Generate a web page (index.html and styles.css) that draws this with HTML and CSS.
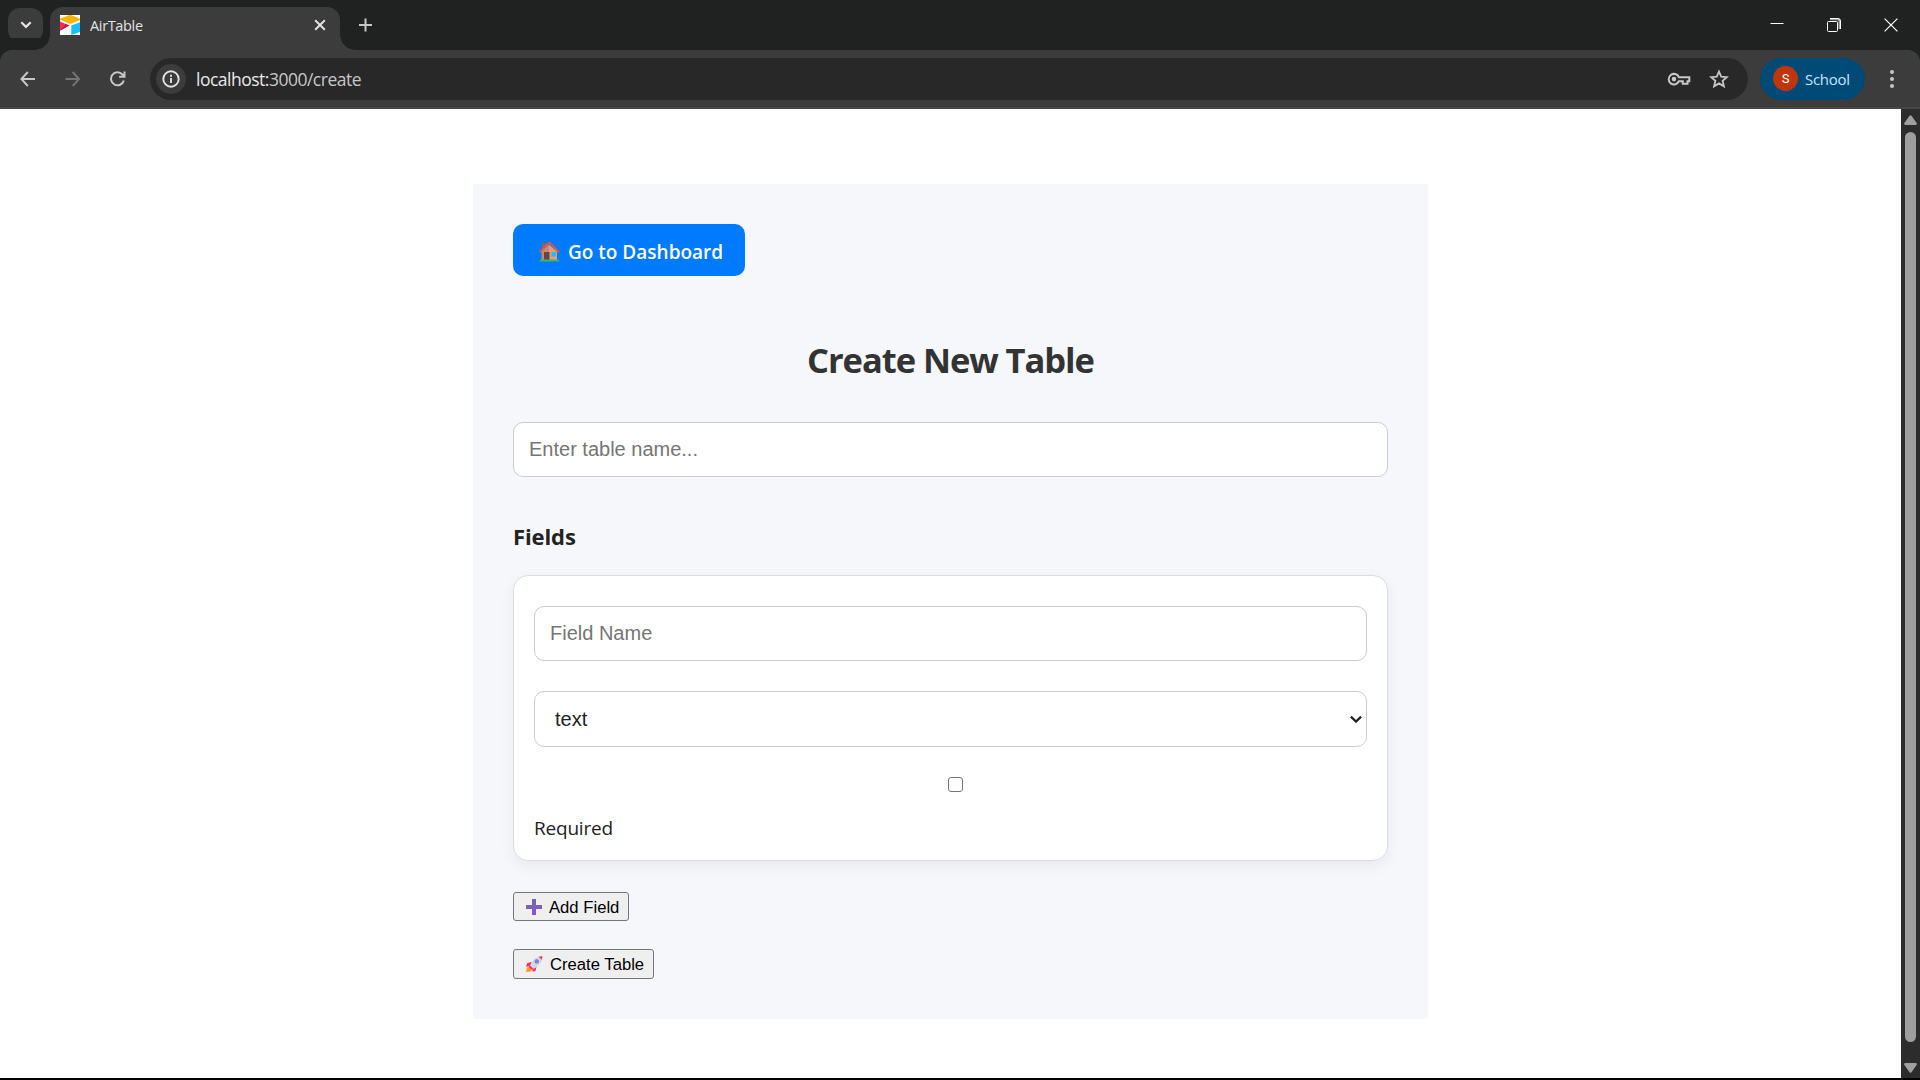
FILE: index.html
```html
<!DOCTYPE html>
<html lang="en">
<head>
<meta charset="utf-8">
<title>AirTable</title>
<link rel="stylesheet" href="styles.css">
</head>
<body>
<div class="window">
  <header class="tabstrip">
    <button class="tab-search" aria-label="Search tabs"><svg width="12" height="8" viewBox="0 0 12 8" fill="none" stroke="#e3e3e3" stroke-width="2.2"><path d="M1.3 1.2 6 5.9l4.700-4.700"/></svg></button>
    <div class="tab">
      <svg class="favicon" viewBox="0 0 20 20"><path fill="#fff" d="M0 0h20v20H0z"/><path fill="#fcb400" d="M0 3.700 9.500 0h1.500L20 3.700V5l-9.500 4L0 4.800z"/><path fill="#18bfff" d="M11.300 10.600 20 7.200V17l-8.700 3z"/><path fill="#f82b60" d="M0 6.500 9.300 10.600 0 15.800z"/><path fill="#ba1e45" d="M0 15.800 5.800 9 9.300 10.600z"/></svg>
      <span class="tab-title">AirTable</span>
      <svg class="tab-close" width="12" height="12" viewBox="0 0 12 12" stroke="#e3e3e3" stroke-width="2"><path d="m1.200 1.200 9.600 9.600M10.800 1.200l-9.600 9.600"/></svg>
    </div>
    <svg class="new-tab" width="14" height="14" viewBox="0 0 14 14" stroke="#c7c7c7" stroke-width="2"><path d="M7.500 .5v13M1 7h13"/></svg>
    <div class="caption">
      <svg width="14" height="14" viewBox="0 0 14 14" stroke="#fff"><path d="M.5 5.500h13"/></svg>
      <svg width="14" height="14" viewBox="0 0 14 14" fill="none" stroke="#fff"><path d="M3 1.300h7.500q2 0 2 2V11" stroke="#a5a5a5" stroke-width="2"/><path d="M3 .5h8q2.500 0 2.500 2.500v8"/><rect x=".5" y="3.500" width="10" height="10" rx="1" fill="#202221"/></svg>
      <svg width="14" height="14" viewBox="0 0 14 14" stroke="#fff" stroke-width="1.200"><path d="m.6.6 12.800 12.800M13.400.6.6 13.400"/></svg>
    </div>
  </header>
  <nav class="toolbar">
    <svg class="nav-icon" width="16" height="16" viewBox="0 0 16 16" fill="none" stroke="#c7c7c7" stroke-width="1.900"><path d="M7.800 1 1.400 8l6.400 7M1.400 8H15"/></svg>
    <svg class="nav-icon" width="16" height="16" viewBox="0 0 16 16" fill="none" stroke="#757575" stroke-width="1.900"><path d="M7.700 1l6.400 7-6.400 7M14.100 8H.5"/></svg>
    <svg class="nav-icon" width="16" height="16" viewBox="0 0 16 16" fill="none" stroke="#c7c7c7" stroke-width="2"><path d="M13.800 9.500A6.500 6.500 0 1 1 12.400 3.500L14.300 5.500M14.500 .5v5.300H9.100"/></svg>
    <div class="omnibox">
      <span class="site-info"><svg width="18" height="18" viewBox="0 0 18 18" fill="none" stroke="#e3e3e3" stroke-width="1.900"><circle cx="9" cy="9" r="7.700"/><path d="M9 8v5M9 4.700v2"/></svg></span>
      <span class="url">localhost:<span class="url-rest">3000/create</span></span>
      <svg class="key" width="24" height="14" viewBox="0 0 24 14" fill="none" stroke="#c7c7c7" stroke-width="2"><path d="M11.900 5.200H22.300V9.200H20.500V11.800H15.800V9.200H11.900A5.300 5.300 0 1 1 11.900 5.200Z"/><circle cx="7" cy="7.100" r="2.300" fill="#c7c7c7" stroke="none"/></svg>
      <svg class="star" width="20" height="20" viewBox="0 0 20 20" fill="none" stroke="#c7c7c7" stroke-width="1.800"><path d="m10 2.500 2.200 5.100 5.600.5-4.200 3.700 1.300 5.500-4.900-2.900-4.900 2.900 1.300-5.500-4.200-3.700 5.600-.5z"/></svg>
    </div>
    <div class="profile"><span class="avatar">S</span><span class="profile-name">School</span></div>
    <svg class="menu" width="4" height="18" viewBox="0 0 4 18" fill="#c7c7c7"><circle cx="2" cy="2" r="2"/><circle cx="2" cy="9" r="2"/><circle cx="2" cy="16" r="2"/></svg>
  </nav>
  <div class="viewport">
    <main class="page">
      <section class="container">
        <a class="dashboard-link">
          <svg width="21" height="20" viewBox="0 0 21 20"><path fill="#8d6553" d="M3 1h3.500v8H3z"/><path fill="#d9a17c" d="M10 2.500 2.800 9.500V18H18V9.500z"/><path fill="#c48b70" d="M10 2.500 2.800 9.500V18H10z"/><path fill="#6d4240" d="M5 10h5.500v8H5z"/><path fill="#2fb6ee" d="M12.500 10H17v4.500h-4.500z"/><path fill="none" stroke="#f4513d" stroke-width="1.800" d="M.8 10.300 8.500 1.800q1.700-1.700 3.400 0l8.300 8.500"/><path fill="#3fb56b" d="M1.500 17.500h18l1.200 2H.3z"/></svg>
          <span>Go to Dashboard</span>
        </a>
        <h1 class="title">Create New Table</h1>
        <input class="control" type="text" placeholder="Enter table name...">
        <h2 class="subtitle">Fields</h2>
        <div class="field-card">
          <input class="control" type="text" placeholder="Field Name">
          <div class="control select"><span>text</span><svg width="12" height="8" viewBox="0 0 12 8" fill="none" stroke="#222" stroke-width="2.200"><path d="m.9 1.600 5.100 5 5.100-5"/></svg></div>
          <span class="checkbox" role="checkbox" aria-checked="false"></span>
          <span class="required">Required</span>
        </div>
        <button class="action add"><svg width="16" height="16" viewBox="0 0 16 16"><defs><linearGradient id="plus" x2="0" y2="1"><stop stop-color="#7563ae"/><stop offset=".5" stop-color="#7d62bd"/><stop offset="1" stop-color="#8b4ddb"/></linearGradient></defs><path fill="url(#plus)" d="M6 0h4v6h6v4h-6v6H6v-6H0V6h6z"/></svg><span>Add Field</span></button>
        <button class="action create"><svg width="17" height="16" viewBox="0 0 17 16"><path fill="#ff9626" d="M1 11.500 4 10l2.500 3L5 15.500 0 16z"/><path fill="#ef3566" d="M5.500 6 1.200 7 0 10.800l4.500-.8zM10.500 10.800 9.500 15l-3 .8.300-4.500z"/><path fill="#dfcfe8" d="M4 10Q6 3.500 12 .8l4 3.600Q13.500 10 7 13z"/><path fill="#f13c59" d="M12.500.7 16.500 0l-.7 4z"/><path fill="#e8346a" d="m4 9.700 3.600 3-1.800.8-2.900-2.400z"/><circle cx="10.800" cy="5.400" r="2.200" fill="#7e77ad"/><circle cx="10.800" cy="5.400" r="1.600" fill="#4a9be8"/></svg><span>Create Table</span></button>
      </section>
    </main>
    <aside class="scrollbar">
      <svg width="13" height="10" viewBox="0 0 13 10" fill="#9f9f9f"><path d="M5.500.8q1-1.200 2 0l5.300 7.400q.4 1.800-1.200 1.800H1.400Q-.2 10 .2 8.200z"/></svg>
      <span class="thumb"></span>
      <svg width="13" height="10" viewBox="0 0 13 10" fill="#9f9f9f"><path d="M5.500 9.200q1 1.200 2 0l5.300-7.400Q13.200 0 11.600 0H1.400Q-.2 0 .2 1.800z"/></svg>
    </aside>
  </div>
</div>
</body>
</html>
```
FILE: styles.css
```css
* { box-sizing: border-box; }
body { margin: 0; background: #000; font-family: "Open Sans", "Noto Sans", sans-serif; color: #222; }
svg { display: block; flex: none; }
button { font: inherit; }

.window { width: 1920px; height: 1080px; display: flex; flex-direction: column; overflow: hidden; padding-bottom: 2px; background: #000; }

/* Tab strip */
.tabstrip { height: 50px; flex: none; display: flex; background: #202221; padding-left: 8px; }
.tab-search { width: 35px; height: 34px; margin-top: 8px; padding: 0; border: 0; border-radius: 12px; background: #3c3c3c; display: flex; align-items: center; justify-content: center; }
.tab { position: relative; width: 290px; height: 43px; margin: 7px 0 0 7px; padding: 0 14px 7px 10px; display: flex; align-items: center; background: #3c3c3c; border-radius: 13px 13px 0 0; }
.tab::before, .tab::after { content: ""; position: absolute; bottom: 0; width: 15px; height: 15px; }
.tab::before { left: -15px; background: radial-gradient(circle at 0 0, transparent 14.500px, #3c3c3c 15px); }
.tab::after { right: -15px; background: radial-gradient(circle at 100% 0, transparent 14.500px, #3c3c3c 15px); }
.favicon { width: 20px; height: 20px; }
.tab-title { margin: 1px 0 0 10px; font-size: 14.500px; line-height: 20px; letter-spacing: -.35px; color: #e3e3e3; flex: 1; }
.new-tab { margin: 18px 0 0 18px; }
.caption { display: flex; gap: 43px; margin: 18px 22px 0 auto; }

/* Toolbar */
.toolbar { height: 59px; flex: none; display: flex; align-items: center; background: #3c3c3c; border-bottom: 2px solid #474747; border-radius: 12px 12px 0 0; padding: 0 23px 0 20px; box-shadow: 0 -12px 0 0 #202221; }
.nav-icon { margin-right: 29px; }
.omnibox { width: 1598px; height: 42px; margin-top: 1px; border-radius: 21px; background: #282828; display: flex; align-items: center; padding: 0 19px 0 6px; }
.nav-icon + .omnibox { margin-left: -5px; }
.site-info { width: 30px; height: 30px; border-radius: 50%; background: #3c3c3c; display: flex; align-items: center; justify-content: center; }
.url { flex: 1; margin: 0 0 0 10px; font-size: 17.500px; line-height: 24px; letter-spacing: -.5px; color: #e8e8e8; }
.url-rest { color: #c7c7c7; }
.star { margin-left: 18px; }
.profile { width: 105px; height: 42px; margin-left: 12px; border-radius: 21px; background: #004a77; display: flex; align-items: center; padding-left: 13px; }
.avatar { width: 25px; height: 25px; border-radius: 50%; background: #bf360c; color: #fff; font: 13px/26px Roboto, sans-serif; text-align: center; }
.profile-name { margin-left: 7px; font-size: 15px; line-height: 22px; letter-spacing: -.3px; color: #c2e7ff; }
.menu { margin-left: auto; margin-right: 3px; }

/* Page */
.viewport { flex: 1; min-height: 0; display: flex; background: #fff; }
.page { flex: 1; padding-top: 75px; }
.container { width: 955px; height: 835px; margin: 0 auto; padding: 40px; background: #f5f7fb; display: flex; flex-direction: column; align-items: flex-start; }
.dashboard-link { width: 232px; height: 52px; border-radius: 10px; background: #007bff; color: #fff; display: flex; align-items: center; padding-left: 26px; font-size: 19px; line-height: 28px; font-weight: 600; }
.dashboard-link svg { margin-top: 4px; }
.dashboard-link span { margin: 4px 0 0 8px; white-space: nowrap; }
.title { align-self: center; margin: 60px 0 0; font-size: 34.500px; line-height: 48px; letter-spacing: -1.05px; font-weight: 700; color: #333; }
.control { width: 100%; height: 55px; flex: none; border: 1px solid #ccc; border-radius: 10px; background: #fff; padding: 0 15px; font: 20px "Liberation Sans", Arial, sans-serif; color: #222; }
.control::placeholder { color: #757575; opacity: 1; }
.title + .control { margin-top: 38px; }
.subtitle { margin: 44px 0 0; font-size: 22px; line-height: 30px; letter-spacing: -.1px; font-weight: 700; }
.field-card { width: 875px; height: 286px; flex: none; margin-top: 24px; padding: 30px 20px 0; border: 1px solid #ddd; border-radius: 15px; background: #fff; box-shadow: 0 5px 15px rgba(0, 0, 0, .06); display: flex; flex-direction: column; align-items: flex-start; }
.select { height: 56px; margin-top: 30px; display: flex; align-items: center; justify-content: space-between; padding: 0 4px 0 20px; }
.checkbox { align-self: center; width: 15px; height: 15px; margin: 30px 0 0 9px; border: 1px solid #767676; border-radius: 3px; }
.required { margin-top: 22px; font-size: 19px; line-height: 28px; letter-spacing: -.2px; }
.action { display: flex; align-items: center; border: 1px solid #767676; border-radius: 3px; background: #efefef; color: #000; padding: 0 0 0 12px; gap: 7px; font: 16.670px "Liberation Sans", Arial, sans-serif; white-space: nowrap; }
.action span { padding-top: 2px; }
.add { width: 116px; height: 29px; margin-top: 31px; }
.create { width: 141px; height: 30px; margin-top: 28px; }

/* Scrollbar */
.scrollbar { width: 19px; background: #2c2c2c; display: flex; flex-direction: column; align-items: center; padding: 6px 0 5px; }
.thumb { width: 11px; flex: 1; margin: 7px 0 21px; border-radius: 6px; background: #9f9f9f; }
```
